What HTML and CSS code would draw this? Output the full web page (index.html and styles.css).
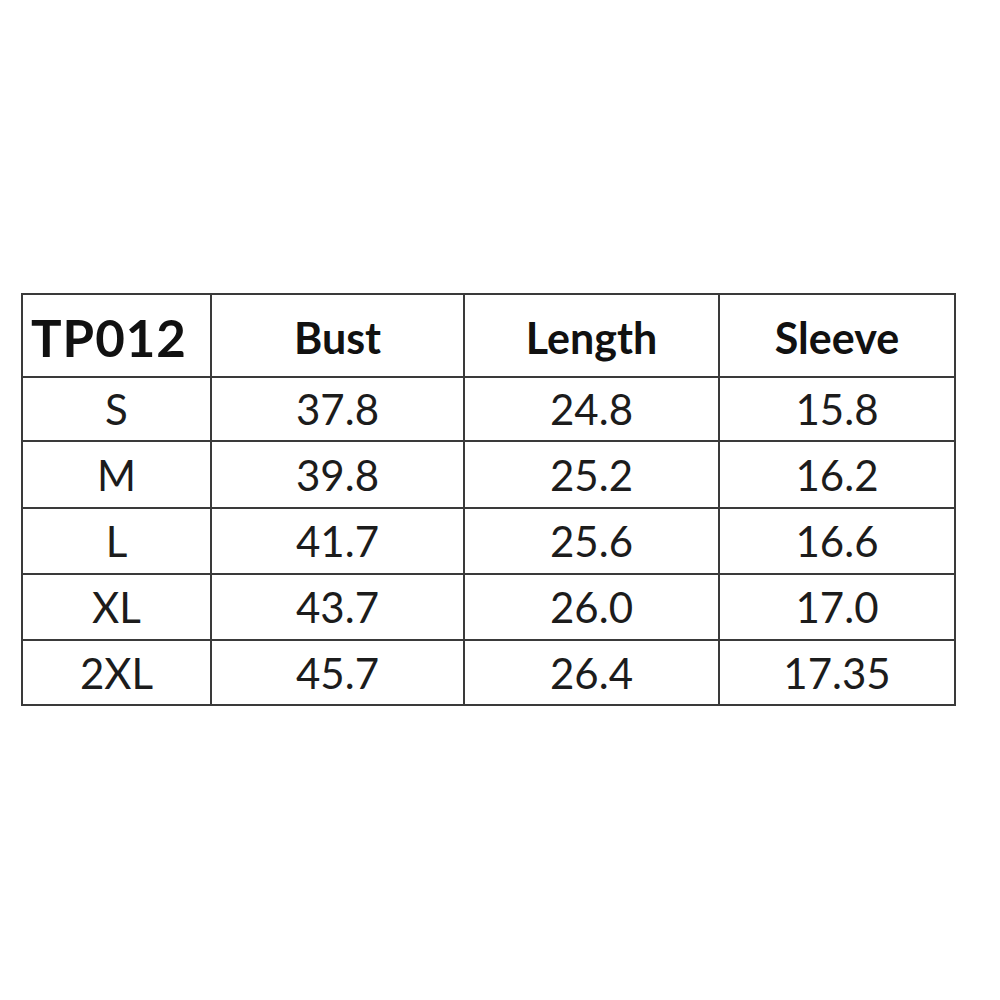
FILE: index.html
```html
<!DOCTYPE html>
<html>
<head>
<meta charset="utf-8">
<link rel="stylesheet" href="styles.css">
</head>
<body>
<div class="page">
  <div class="size-table">
    <div class="cell head code">TP012</div>
    <div class="cell head">Bust</div>
    <div class="cell head">Length</div>
    <div class="cell head">Sleeve</div>

    <div class="cell">S</div>
    <div class="cell">37.8</div>
    <div class="cell">24.8</div>
    <div class="cell">15.8</div>

    <div class="cell">M</div>
    <div class="cell">39.8</div>
    <div class="cell">25.2</div>
    <div class="cell">16.2</div>

    <div class="cell">L</div>
    <div class="cell">41.7</div>
    <div class="cell">25.6</div>
    <div class="cell">16.6</div>

    <div class="cell">XL</div>
    <div class="cell">43.7</div>
    <div class="cell">26.0</div>
    <div class="cell">17.0</div>

    <div class="cell">2XL</div>
    <div class="cell">45.7</div>
    <div class="cell">26.4</div>
    <div class="cell">17.35</div>
  </div>
</div>
</body>
</html>
```

FILE: styles.css
```css
html, body {
  margin: 0;
  padding: 0;
  background: #ffffff;
}

.page {
  width: 1000px;
  height: 1000px;
  padding: 293px 0 0 21px;
  box-sizing: border-box;
}

.size-table {
  display: grid;
  width: 935px;
  box-sizing: border-box;
  grid-template-columns: 187px 251px 253px 234px;
  grid-template-rows: 81px 62px 65px 64px 64px 63px;
  gap: 2px;
  padding: 2px;
  background: #3a3a3a;
  font-family: Lato, "Open Sans", sans-serif;
  color: #1c1c1c;
}

.cell {
  background: #ffffff;
  display: flex;
  align-items: center;
  justify-content: center;
  font-size: 42px;
  line-height: 1;
}

.head {
  font-weight: 700;
  font-size: 43px;
  color: #111111;
  padding-top: 3px;
  box-sizing: border-box;
}

.code {
  font-size: 51px;
  letter-spacing: 1px;
  justify-content: flex-start;
  padding-left: 8px;
}
```
